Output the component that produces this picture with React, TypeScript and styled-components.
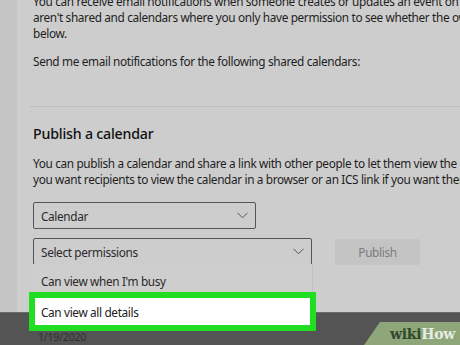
import React from "react";
import styled, { createGlobalStyle } from "styled-components";

const Global = createGlobalStyle`
  html, body { margin: 0; padding: 0; }
  body {
    width: 460px;
    height: 345px;
    overflow: hidden;
    font-family: "Noto Sans", "Open Sans", sans-serif;
    background: #cccccc;
  }
`;

const Screen = styled.div`
  position: relative;
  width: 460px;
  height: 345px;
  display: flex;
  flex-direction: column;
  overflow: hidden;
`;

const Workspace = styled.div`
  height: 312px;
  flex: none;
  display: flex;
  flex-direction: row;
`;

const SideStrip = styled.div`
  width: 17px;
  flex: none;
  background: #c5c5c5;
`;

const Main = styled.div`
  flex: 1;
  min-width: 0;
  background: #cdcdcd;
  padding-left: 16px;
  display: flex;
  flex-direction: column;
  color: #1e1e1e;
`;

const textStyle = `
  font-size: 11.8px;
  letter-spacing: -0.35px;
`;

const Paragraph = styled.p<{ $top?: number }>`
  margin: ${(p) => p.$top ?? 0}px 0 0 0;
  ${textStyle}
  line-height: 16px;
  white-space: nowrap;
`;

const Divider = styled.div`
  height: 1px;
  background: #bdbdbd;
  margin: 37px 0 0 -3px;
`;

const Heading = styled.h2`
  margin: 17px 0 0 0;
  font-size: 14.2px;
  letter-spacing: -0.2px;
  font-weight: 500;
  line-height: 20px;
  color: #111;
`;

const SelectBox = styled.div<{ $width: number }>`
  box-sizing: border-box;
  width: ${(p) => p.$width}px;
  height: 27px;
  border: 1px solid #555;
  border-radius: 2px;
  display: flex;
  align-items: center;
  justify-content: space-between;
  padding: 0 7px;
  ${textStyle}
  color: #2a2a2a;
`;

const Chevron = () => (
  <svg width="11" height="7" viewBox="0 0 11 7">
    <path d="M0.5 0.8 L5.5 5.8 L10.5 0.8" fill="none" stroke="#555" strokeWidth="1" />
  </svg>
);

const Row = styled.div<{ $top: number }>`
  display: flex;
  align-items: center;
  gap: 23px;
  margin-top: ${(p) => p.$top}px;
`;

const SelectWrap = styled.div`
  position: relative;
`;

const Menu = styled.div`
  position: absolute;
  left: 0;
  top: 26px;
  width: 279px;
  z-index: 5;
  background: #cecece;
  box-shadow: 1px 0 0 #c2c2c2;
`;

const MenuItem = styled.div`
  height: 34px;
  display: flex;
  align-items: center;
  padding-left: 8px;
  ${textStyle}
  color: #2a2a2a;
`;

const Highlight = styled.div`
  position: absolute;
  left: -4px;
  top: 28px;
  width: 287px;
  height: 39px;
  box-sizing: border-box;
  border: 6px solid #22de22;
  background: #fff;
  display: flex;
  align-items: center;
  padding-left: 6px;
  ${textStyle}
  color: #222;
`;

const PublishButton = styled.button`
  width: 85px;
  height: 26px;
  border: none;
  border-radius: 2px;
  background: #c4c4c4;
  color: #7b7b7b;
  font-family: inherit;
  ${textStyle}
  padding: 0;
`;

const Taskbar = styled.div`
  flex: 1;
  background: #545454;
  border-top: 1px solid #6a6a6a;
  display: flex;
  align-items: flex-end;
  padding: 0 0 1px 38px;
`;

const DateText = styled.span`
  font-size: 10.5px;
  letter-spacing: -0.2px;
  color: #2f2f2f;
  line-height: 14px;
`;

const Watermark = styled.div`
  position: absolute;
  right: 0;
  bottom: 0;
  width: 96px;
  height: 23px;
  background: #8ea67a;
  clip-path: polygon(16px 0, 100% 0, 100% 100%, 0 100%);
  display: flex;
  align-items: center;
  justify-content: flex-end;
  padding-right: 5px;
  box-sizing: border-box;
  font-family: "DejaVu Serif", "Liberation Serif", serif;
  font-weight: 700;
  font-size: 14px;
  letter-spacing: -0.3px;
`;

const Wiki = styled.span`
  color: #2f4a2a;
`;

const How = styled.span`
  color: #e6ece2;
`;

export default function App() {
  return (
    <>
      <Global />
      <Screen>
        <Workspace>
          <SideStrip />
          <Main>
            <Paragraph $top={-7}>
              You can receive email notifications when someone creates or updates an event on
              <br />
              aren't shared and calendars where you only have permission to see whether the owner
              <br />
              below.
            </Paragraph>
            <Paragraph $top={12}>Send me email notifications for the following shared calendars:</Paragraph>
            <Divider />
            <Heading>Publish a calendar</Heading>
            <Paragraph $top={11}>
              You can publish a calendar and share a link with other people to let them view the
              <br />
              you want recipients to view the calendar in a browser or an ICS link if you want them
            </Paragraph>
            <Row $top={15}>
              <SelectBox $width={223}>
                <span>Calendar</span>
                <Chevron />
              </SelectBox>
            </Row>
            <Row $top={9}>
              <SelectWrap>
                <SelectBox $width={279}>
                  <span>Select permissions</span>
                  <Chevron />
                </SelectBox>
                <Menu>
                  <MenuItem>Can view when I'm busy</MenuItem>
                  <Highlight>Can view all details</Highlight>
                </Menu>
              </SelectWrap>
              <PublishButton>Publish</PublishButton>
            </Row>
          </Main>
        </Workspace>
        <Taskbar>
          <DateText>1/19/2020</DateText>
        </Taskbar>
        <Watermark>
          <Wiki>wiki</Wiki>
          <How>How</How>
        </Watermark>
      </Screen>
    </>
  );
}
